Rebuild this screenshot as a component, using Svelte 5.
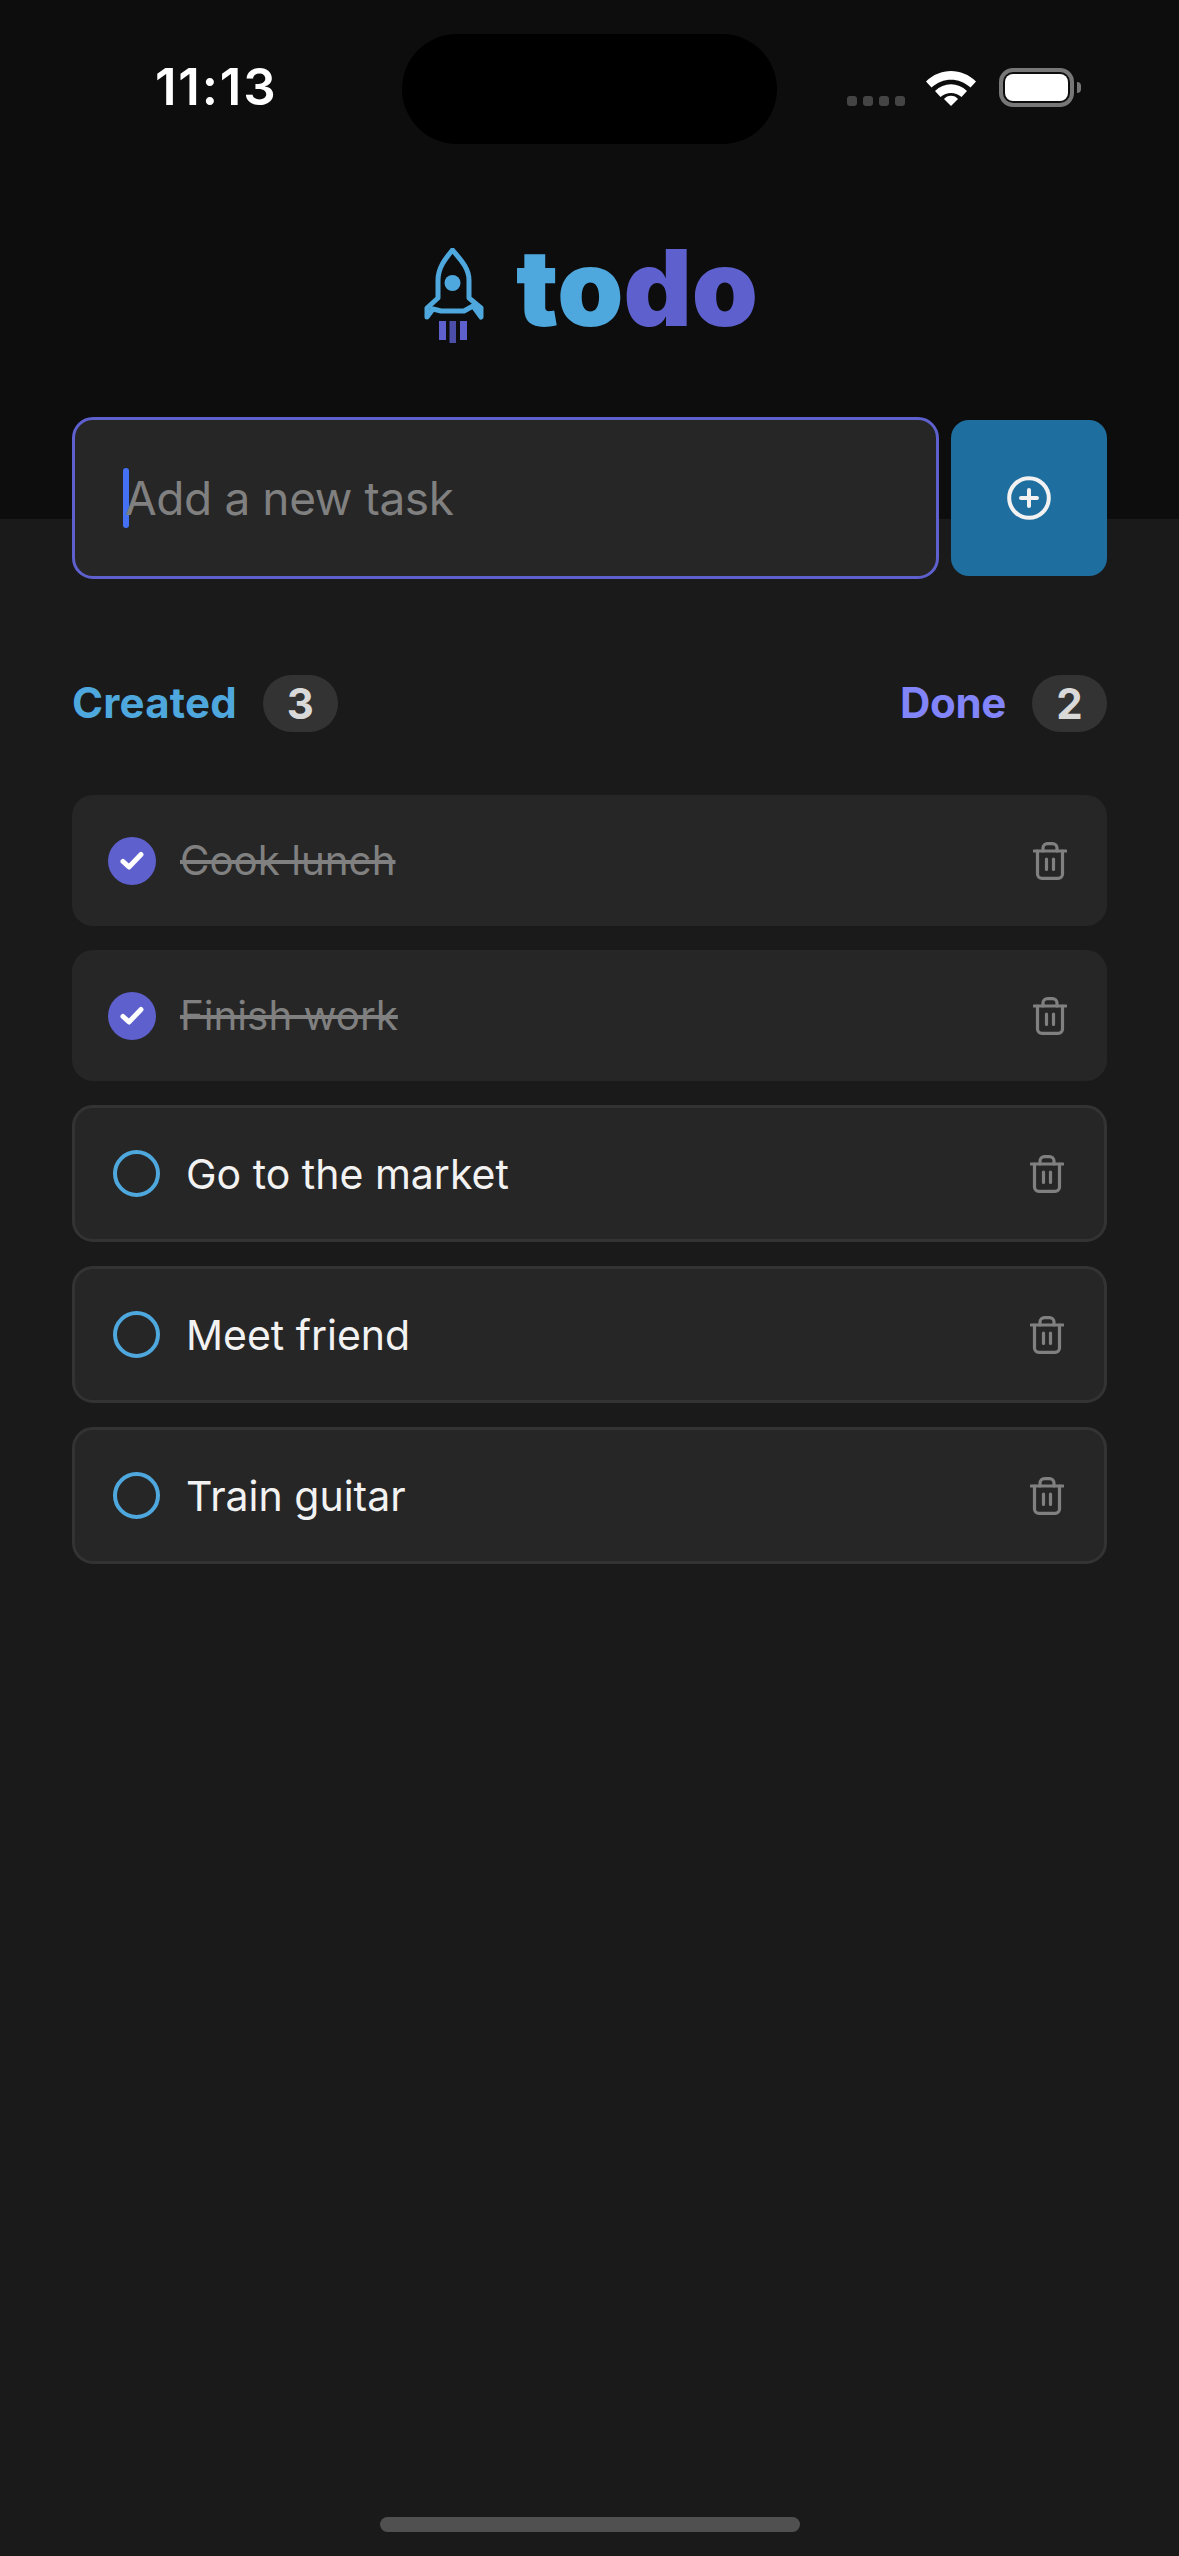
<script>
	const tasks = [
		{ id: 1, title: "Cook lunch", done: true },
		{ id: 2, title: "Finish work", done: true },
		{ id: 3, title: "Go to the market", done: false },
		{ id: 4, title: "Meet friend", done: false },
		{ id: 5, title: "Train guitar", done: false }
	];

	const created = tasks.filter((t) => !t.done).length;
	const finished = tasks.filter((t) => t.done).length;
</script>

<div class="screen">
	<header class="top">
		<div class="status">
			<span class="time">11:13</span>
			<div class="island"></div>
			<div class="status-icons">
				<div class="signal">
					<i></i><i></i><i></i><i></i>
				</div>
				<svg class="wifi" width="50" height="35" viewBox="0 0 50 35">
					<path d="M0 10.5C14 -3.5 36 -3.5 50 10.5L44.5 16.5C33 6 17 6 5.5 16.5Z" fill="#fff" />
					<path d="M9 20C18 11 32 11 41 20L35.5 26C29 20.5 21 20.5 14.5 26Z" fill="#fff" />
					<path d="M18 28C21 23.5 29 23.5 32 28L25 35Z" fill="#fff" />
				</svg>
				<div class="battery">
					<div class="battery-fill"></div>
				</div>
				<div class="battery-nub"></div>
			</div>
		</div>
		<div class="logo">
			<svg class="rocket" width="60" height="96" viewBox="0 0 60 96">
				<path
					d="M28.5 2C21 11 14 20 14 32V50L3 60V69L9 61L17 63H40L49 58L57 69V60L45 50V32C45 20 36 11 28.5 2Z"
					fill="none"
					stroke="#4ea8de"
					stroke-width="5"
					stroke-linejoin="round"
				/>
				<circle cx="28.5" cy="35" r="8" fill="#4ea8de" />
				<rect x="15" y="73" width="7" height="19" fill="#5e60ce" />
				<rect x="25.5" y="73" width="6.5" height="22" fill="#4c4fa8" />
				<rect x="36" y="73" width="7" height="19" fill="#5e60ce" />
			</svg>
			<h1><span class="to">to</span><span class="do">do</span></h1>
		</div>
	</header>

	<form class="new-task">
		<div class="input">
			<span class="caret"></span>
			<span class="placeholder">Add a new task</span>
		</div>
		<button type="button" class="add" aria-label="Add">
			<svg width="44" height="44" viewBox="0 0 44 44" fill="none" stroke="#f2f2f2" stroke-width="4" stroke-linecap="round">
				<circle cx="22" cy="22" r="19.8" />
				<path d="M14 22H30M22 14V30" />
			</svg>
		</button>
	</form>

	<main class="content">
		<div class="counters">
			<div class="counter">
				<span class="label created">Created</span>
				<span class="badge">{created}</span>
			</div>
			<div class="counter">
				<span class="label done">Done</span>
				<span class="badge">{finished}</span>
			</div>
		</div>

		<ul class="tasks">
			{#each tasks as task (task.id)}
				<li class="task" class:finished={task.done}>
					{#if task.done}
						<span class="check">
							<svg width="24" height="20" viewBox="0 0 24 20" fill="none" stroke="#fff" stroke-width="5" stroke-linecap="round" stroke-linejoin="round">
								<path d="M3 10.5L9 16L21 3.5" />
							</svg>
						</span>
					{:else}
						<span class="circle"></span>
					{/if}
					<span class="title">{task.title}</span>
					<svg class="trash" width="34" height="38" viewBox="0 0 34 38" fill="none" stroke="#808080" stroke-width="3.2" stroke-linecap="round">
						<path d="M1 9H33" />
						<path d="M10 9V6C10 3.5 12 1.6 14.5 1.6H19.5C22 1.6 24 3.5 24 6V9" />
						<path d="M4.5 9V32C4.5 34.6 6.4 36.4 9 36.4H25C27.6 36.4 29.5 34.6 29.5 32V9" />
						<path d="M13.5 17V27.5M20.5 17V27.5" />
					</svg>
				</li>
			{/each}
		</ul>
	</main>

	<div class="home-bar"></div>
</div>

<style>
	:global(body) {
		margin: 0;
		padding: 0;
		background-color: #1a1a1a;
		font-family: "Inter", sans-serif;
	}

	* {
		box-sizing: border-box;
	}

	.screen {
		position: relative;
		width: 1179px;
		height: 2556px;
		overflow: hidden;
		background-color: #1a1a1a;
	}

	.top {
		height: 519px;
		background-color: #0d0d0d;
	}

	.status {
		display: flex;
		justify-content: space-between;
		padding: 34px 98px 0 155px;
		height: 144px;
		position: relative;
	}

	.time {
		color: #fff;
		font-size: 51px;
		font-weight: 600;
		line-height: 62px;
		letter-spacing: 1.8px;
		margin-top: 22px;
	}

	.island {
		position: absolute;
		left: 402px;
		top: 34px;
		width: 375px;
		height: 110px;
		border-radius: 55px;
		background-color: #000;
	}

	.status-icons {
		display: flex;
		align-items: flex-end;
		height: 73px;
	}

	.signal {
		display: flex;
		gap: 6px;
		margin-right: 21px;
		margin-bottom: 1px;
	}

	.signal i {
		width: 10px;
		height: 10px;
		border-radius: 3px;
		background-color: #444;
	}

	.wifi {
		margin-right: 23px;
		margin-bottom: 1px;
	}

	.battery {
		width: 75px;
		height: 39px;
		padding: 2px;
		border: 4px solid #777;
		border-radius: 14px;
	}

	.battery-fill {
		width: 100%;
		height: 100%;
		border-radius: 8px;
		background-color: #fff;
	}

	.battery-nub {
		width: 4px;
		height: 11px;
		margin: 0 0 14px 3px;
		border-radius: 0 5px 5px 0;
		background-color: #777;
	}

	.logo {
		display: flex;
		justify-content: center;
		align-items: flex-start;
		gap: 32px;
		margin-top: 104px;
		padding-left: 3px;
	}

	h1 {
		margin: -8px 0 0;
		font-size: 106px;
		font-weight: 900;
		line-height: 96px;
	}

	.to {
		color: #4ea8de;
	}

	.do {
		color: #5e60ce;
	}

	.new-task {
		display: flex;
		align-items: center;
		gap: 12px;
		margin: -102px 72px 0;
	}

	.input {
		flex: 1;
		display: flex;
		align-items: center;
		height: 162px;
		padding-left: 48px;
		border: 3px solid #5e60ce;
		border-radius: 21px;
		background-color: #262626;
	}

	.caret {
		width: 6px;
		height: 60px;
		border-radius: 3px;
		background-color: #4470f4;
	}

	.placeholder {
		color: #808080;
		font-size: 46px;
		line-height: 60px;
		letter-spacing: -0.4px;
		margin-left: -4px;
		margin-top: -1px;
	}

	.add {
		display: flex;
		align-items: center;
		justify-content: center;
		width: 156px;
		height: 156px;
		padding: 0;
		border: none;
		border-radius: 18px;
		background-color: #1e6f9f;
	}

	.content {
		padding: 0 72px;
	}

	.counters {
		display: flex;
		justify-content: space-between;
		margin-top: 96px;
	}

	.counter {
		display: flex;
		align-items: center;
		gap: 26px;
	}

	.label {
		font-size: 42px;
		font-weight: 700;
		margin-top: -2px;
	}

	.created {
		color: #4ea8de;
		letter-spacing: 0.2px;
	}

	.done {
		color: #8284fa;
		letter-spacing: -0.3px;
	}

	.badge {
		display: flex;
		align-items: center;
		justify-content: center;
		width: 75px;
		height: 57px;
		border-radius: 29px;
		background-color: #333;
		color: #d9d9d9;
		font-size: 42px;
		font-weight: 700;
	}

	.tasks {
		display: flex;
		flex-direction: column;
		gap: 24px;
		margin: 63px 0 0;
		padding: 0;
		list-style: none;
	}

	.task {
		display: flex;
		align-items: center;
		height: 137px;
		padding: 0 40px 0 38px;
		border: 3px solid #333;
		border-radius: 21px;
		background-color: #262626;
	}

	.task.finished {
		height: 131px;
		padding: 0 40px 0 36px;
		border: none;
	}

	.circle {
		width: 47px;
		height: 47px;
		border: 4px solid #4ea8de;
		border-radius: 50%;
		margin-right: 26px;
	}

	.check {
		display: flex;
		align-items: center;
		justify-content: center;
		width: 48px;
		height: 48px;
		border-radius: 50%;
		background-color: #5e60ce;
		margin-right: 24px;
	}

	.title {
		flex: 1;
		color: #f2f2f2;
		font-size: 41px;
	}

	.finished .title {
		color: #808080;
		font-size: 40.3px;
		text-decoration: line-through;
	}

	.home-bar {
		position: absolute;
		left: 380px;
		bottom: 24px;
		width: 420px;
		height: 15px;
		border-radius: 8px;
		background-color: #505050;
	}
</style>
